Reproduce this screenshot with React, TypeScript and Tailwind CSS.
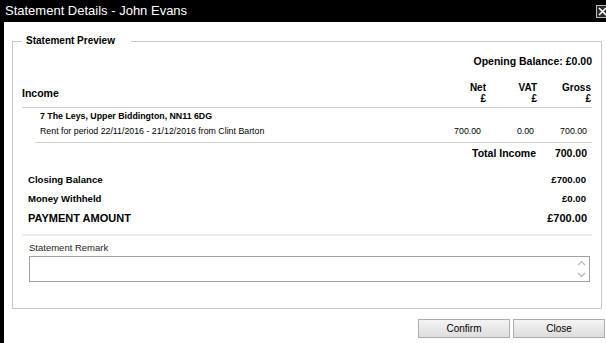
import React from "react";

function CloseBox() {
  return (
    <div className="w-[13px] h-[13px] mr-[-3px] border border-[#b8b8b8] bg-[#2a2a2a] flex items-center justify-center shrink-0">
      <svg width="9" height="9" viewBox="0 0 9 9">
        <path d="M1 1 L8 8 M8 1 L1 8" stroke="#ffffff" strokeWidth="1.6" />
      </svg>
    </div>
  );
}

function Spinner() {
  return (
    <div className="flex flex-col items-center justify-between h-full py-[3px] pr-[3px]">
      <svg width="9" height="6" viewBox="0 0 9 6">
        <path d="M1 5 L4.5 1.5 L8 5" stroke="#b4b4b4" strokeWidth="1.1" fill="none" />
      </svg>
      <svg width="9" height="6" viewBox="0 0 9 6">
        <path d="M1 1 L4.5 4.5 L8 1" stroke="#b4b4b4" strokeWidth="1.1" fill="none" />
      </svg>
    </div>
  );
}

export default function App() {
  return (
    <div className="w-[606px] h-[343px] overflow-hidden bg-white text-black font-['Liberation_Sans',Arial,sans-serif] flex flex-col">
      <div className="h-[22px] bg-black flex items-center justify-between pl-[5px] shrink-0">
        <span className="text-white text-[13px] leading-[16px]">Statement Details - John Evans</span>
        <CloseBox />
      </div>

      <div className="flex-1 border-l-4 border-black pl-[8px] pt-[13px] flex flex-col">
        <fieldset className="w-[590px] h-[274px] border border-[#c8c8c8] px-[9px] flex flex-col">
          <legend className="pl-[4px] pr-[16px] text-[10px] leading-[12px] font-bold">Statement Preview</legend>

          <div className="mt-[8px] pr-[0px] text-right text-[10.5px] leading-[12px] font-bold">
            Opening Balance: £0.00
          </div>

          <div className="mt-[15px] pb-[3px] border-b border-[#cfcfcf] flex items-center font-bold text-[10px] leading-[11px]">
            <div className="flex-1 text-[10.5px]">Income</div>
            <div className="w-[50px] text-right">
              <div>Net</div>
              <div>£</div>
            </div>
            <div className="w-[51px] text-right">
              <div>VAT</div>
              <div>£</div>
            </div>
            <div className="w-[54px] mr-[1px] text-right">
              <div>Gross</div>
              <div>£</div>
            </div>
          </div>

          <div className="ml-[13px] pl-[5px] pr-[5px] pt-[3px] pb-[5px] border-b border-[#cfcfcf] text-[8.8px] leading-[11px]">
            <div className="font-bold">7 The Leys, Upper Biddington, NN11 6DG</div>
            <div className="mt-[4px] flex">
              <div className="flex-1">Rent for period 22/11/2016 - 21/12/2016 from Clint Barton</div>
              <div className="w-[53px] text-right">700.00</div>
              <div className="w-[53px] text-right">0.00</div>
              <div className="w-[53px] text-right">700.00</div>
            </div>
          </div>

          <div className="mt-[4px] pr-[5px] flex justify-end font-bold text-[10.5px] leading-[12px]">
            <div className="text-right">Total Income</div>
            <div className="w-[51px] text-right">700.00</div>
          </div>

          <div className="mt-[15px] pl-[6px] pr-[6px] flex justify-between font-bold text-[9.6px] leading-[11px]">
            <div>Closing Balance</div>
            <div>£700.00</div>
          </div>
          <div className="mt-[8px] pl-[6px] pr-[6px] flex justify-between font-bold text-[9.6px] leading-[11px]">
            <div>Money Withheld</div>
            <div>£0.00</div>
          </div>
          <div className="mt-[8px] pl-[6px] pr-[5px] flex justify-between font-bold text-[11px] leading-[13px]">
            <div>PAYMENT AMOUNT</div>
            <div>£700.00</div>
          </div>

          <div className="mt-[9px] h-[2px] bg-[#ececec]" />

          <div className="mt-[6px] pl-[7px] text-[9.5px] leading-[11px] text-[#222]">Statement Remark</div>
          <div className="mt-[3px] ml-[7px] mr-[2px] h-[26px] border border-[#a0a0a0] bg-white flex justify-end">
            <Spinner />
          </div>
        </fieldset>

        <div className="mt-[10px] flex justify-end gap-[3px] pr-[1px]">
          <button className="w-[92px] h-[19px] border border-[#acacac] bg-gradient-to-b from-[#f4f4f4] to-[#dddddd] text-[10px] leading-[17px] text-black">
            Confirm
          </button>
          <button className="w-[92px] h-[19px] border border-[#acacac] bg-gradient-to-b from-[#f4f4f4] to-[#dddddd] text-[10px] leading-[17px] text-black">
            Close
          </button>
        </div>
      </div>
    </div>
  );
}
